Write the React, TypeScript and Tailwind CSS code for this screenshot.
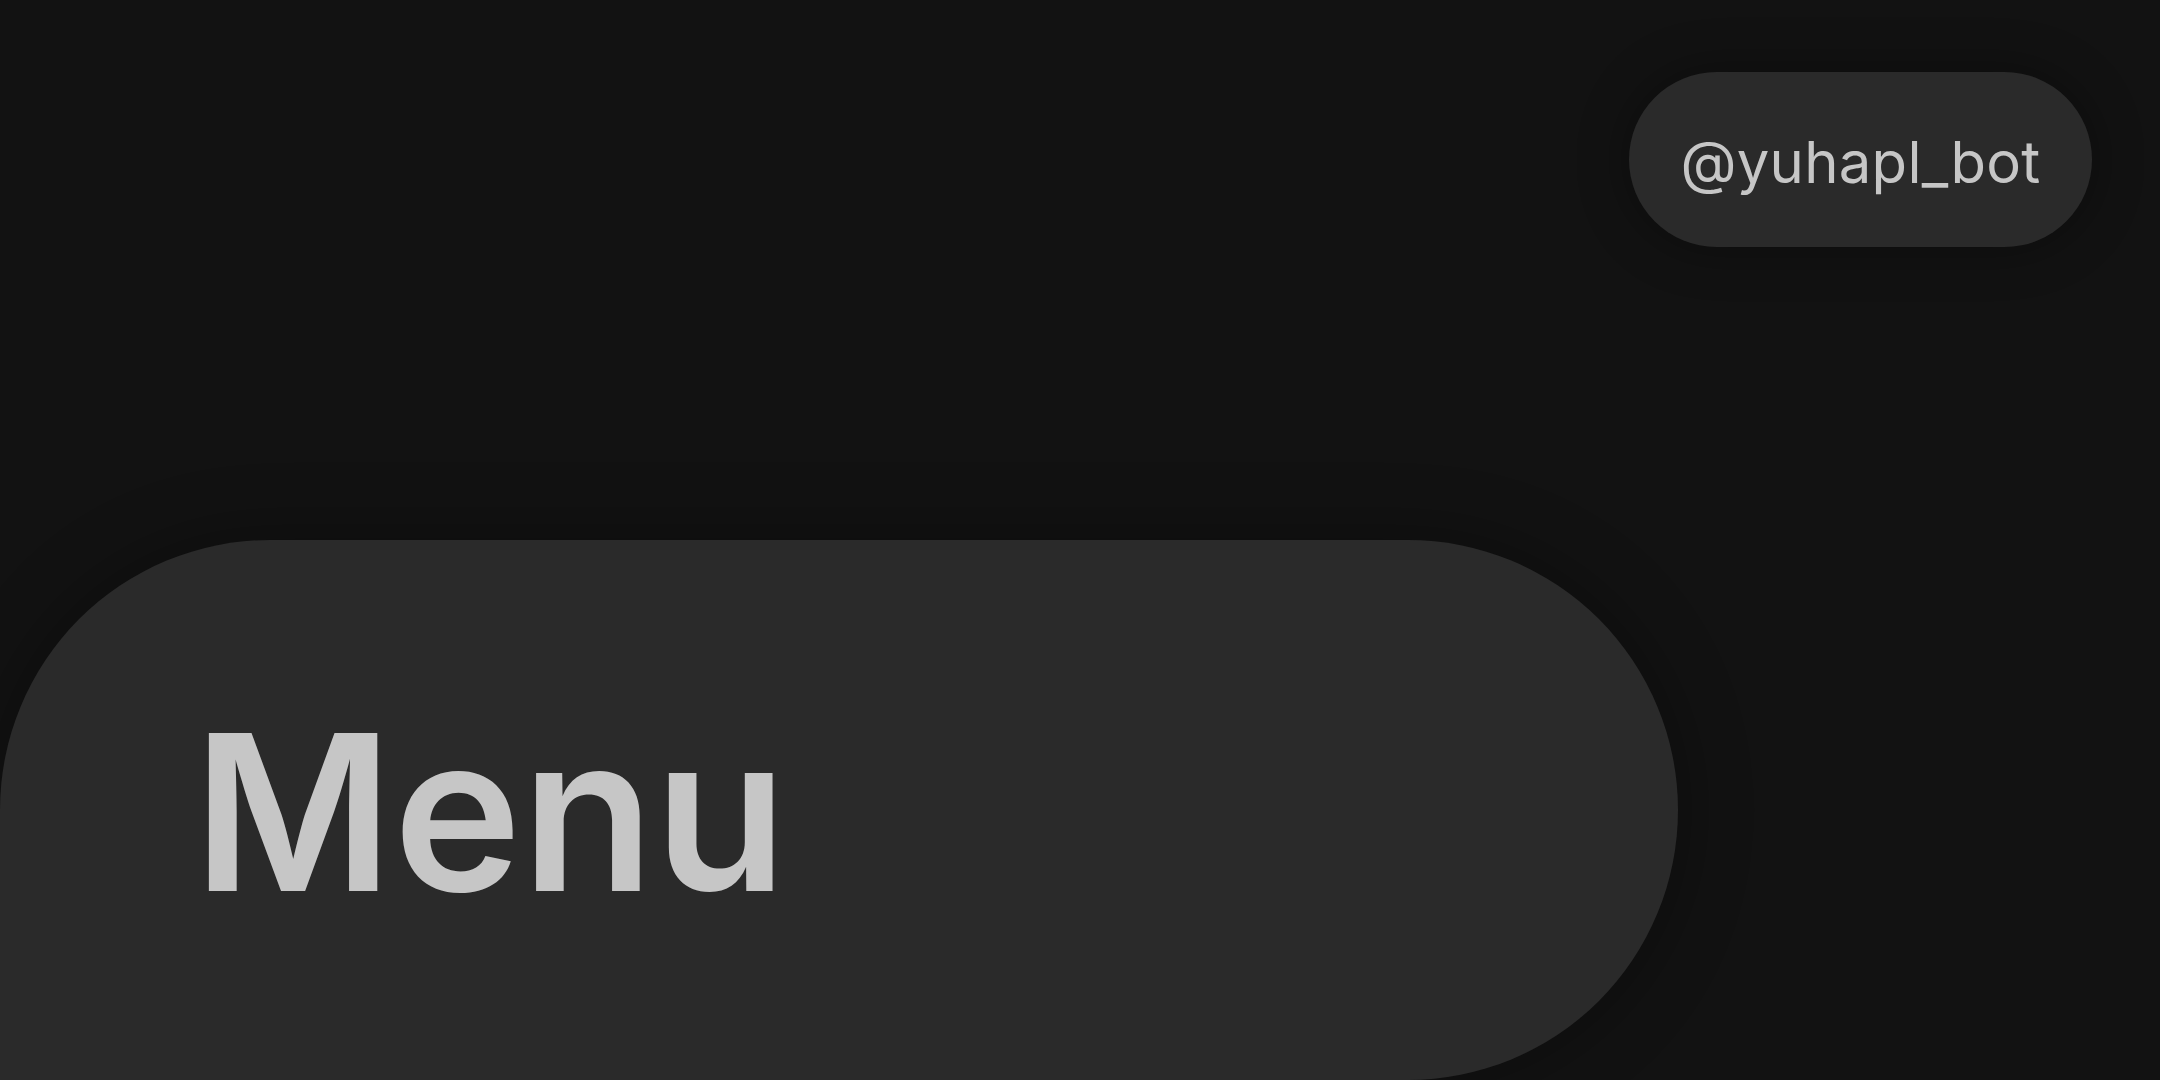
export default function App() {
  return (
    <div className="h-[1080px] w-full overflow-hidden bg-[#121212] flex flex-col" style={{ fontFamily: 'Inter, "Noto Sans", sans-serif' }}>
      <div className="self-end mt-[72px] mr-[68px] w-[463px] h-[175px] rounded-full bg-[#2a2a2a] shadow-[0_0_50px_rgba(0,0,0,0.35)] flex items-center justify-center">
        <span className="text-[58px] font-normal text-[#c6c6c6] leading-none tracking-[0.005em] pt-[4px]">@yuhapl_bot</span>
      </div>

      <div className="mt-auto w-[1678px] h-[540px] bg-[#2a2a2a] rounded-tl-[270px] rounded-r-[270px] shadow-[0_0_70px_rgba(0,0,0,0.35)] flex items-center pl-[193px]">
        <h1 className="text-[217px] font-semibold text-[#c6c6c6] leading-none tracking-normal pt-[4px]">Menu</h1>
      </div>
    </div>
  );
}
